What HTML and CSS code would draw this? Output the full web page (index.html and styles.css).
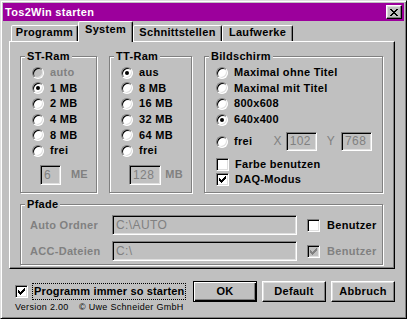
FILE: index.html
```html
<!DOCTYPE html>
<html>
<head>
<meta charset="utf-8">
<title>Tos2Win starten</title>
<link rel="stylesheet" href="styles.css">
</head>
<body>
<div class="window">
  <div class="titlebar">
    <span class="title">Tos2Win starten</span>
    <span class="close"><svg width="8" height="7" viewBox="0 0 8 7" shape-rendering="crispEdges"><path d="M0 0h2v1H0zM6 0h2v1H6zM1 1h2v1H1zM5 1h2v1H5zM2 2h4v1H2zM3 3h2v1H3zM2 4h4v1H2zM1 5h2v1H1zM5 5h2v1H5zM0 6h2v1H0zM6 6h2v1H6z" fill="#000"/></svg></span>
  </div>
  <div class="tabs">
    <div class="tab t-prog">Programm</div>
    <div class="tab active t-sys">System</div>
    <div class="tab t-sch">Schnittstellen</div>
    <div class="tab t-lw">Laufwerke</div>
  </div>
  <div class="panel">
    <div class="groups-row">
      <div class="group g-st">
        <span class="legend">ST-Ram</span>
        <div class="group-body">
          <div class="opt disabled"><span class="radio"></span>auto</div>
          <div class="opt"><span class="radio on"></span>1 MB</div>
          <div class="opt"><span class="radio"></span>2 MB</div>
          <div class="opt"><span class="radio"></span>4 MB</div>
          <div class="opt"><span class="radio"></span>8 MB</div>
          <div class="opt"><span class="radio"></span>frei</div>
          <div class="edit-row"><span class="edit w-st">6</span><span class="unit">ME</span></div>
        </div>
      </div>
      <div class="group g-tt">
        <span class="legend">TT-Ram</span>
        <div class="group-body">
          <div class="opt"><span class="radio on"></span>aus</div>
          <div class="opt"><span class="radio"></span>8 MB</div>
          <div class="opt"><span class="radio"></span>16 MB</div>
          <div class="opt"><span class="radio"></span>32 MB</div>
          <div class="opt"><span class="radio"></span>64 MB</div>
          <div class="opt"><span class="radio"></span>frei</div>
          <div class="edit-row"><span class="edit w-tt">128</span><span class="unit">MB</span></div>
        </div>
      </div>
      <div class="group g-bild">
        <span class="legend">Bildschirm</span>
        <div class="group-body">
          <div class="opt"><span class="radio"></span>Maximal ohne Titel</div>
          <div class="opt"><span class="radio"></span>Maximal mit Titel</div>
          <div class="opt"><span class="radio"></span>800x608</div>
          <div class="opt"><span class="radio on"></span>640x400</div>
          <div class="opt frei-row">
            <span class="radio"></span>frei
            <span class="coords">
              <span class="axis">X</span><span class="edit w-xy">102</span>
              <span class="axis axis-y">Y</span><span class="edit w-xy">768</span>
            </span>
          </div>
          <div class="chk-row first"><span class="checkbox"></span>Farbe benutzen</div>
          <div class="chk-row"><span class="checkbox"><svg width="7" height="7" viewBox="0 0 7 7" shape-rendering="crispEdges"><path d="M0 2h1v3H0zM1 3h1v3H1zM2 4h1v3H2zM3 3h1v3H3zM4 2h1v3H4zM5 1h1v3H5zM6 0h1v3H6z" fill="#000"/></svg></span>DAQ-Modus</div>
        </div>
      </div>
    </div>
    <div class="group g-pfade">
      <span class="legend">Pfade</span>
      <div class="pfade-body">
        <div class="path-row">
          <span class="path-label">Auto Ordner</span>
          <span class="edit w-path">C:\AUTO</span>
          <span class="path-check"><span class="checkbox"></span>Benutzer</span>
        </div>
        <div class="path-row">
          <span class="path-label">ACC-Dateien</span>
          <span class="edit w-path">C:\</span>
          <span class="path-check disabled"><span class="checkbox dis"><svg width="7" height="7" viewBox="0 0 7 7" shape-rendering="crispEdges"><path d="M0 2h1v3H0zM1 3h1v3H1zM2 4h1v3H2zM3 3h1v3H3zM4 2h1v3H4zM5 1h1v3H5zM6 0h1v3H6z" fill="#808080"/></svg></span>Benutzer</span>
        </div>
      </div>
    </div>
  </div>
  <div class="footer">
    <div class="footer-left">
      <div class="main-check">
        <span class="checkbox"><svg width="7" height="7" viewBox="0 0 7 7" shape-rendering="crispEdges"><path d="M0 2h1v3H0zM1 3h1v3H1zM2 4h1v3H2zM3 3h1v3H3zM4 2h1v3H4zM5 1h1v3H5zM6 0h1v3H6z" fill="#000"/></svg></span>
        <span class="focus">Programm immer so starten</span>
      </div>
      <div class="version"><span class="ver">Version 2.00</span><span>© Uwe Schneider GmbH</span></div>
    </div>
    <div class="buttons">
      <span class="btn btn-default">OK</span>
      <span class="btn">Default</span>
      <span class="btn">Abbruch</span>
    </div>
  </div>
</div>
</body>
</html>
```

FILE: styles.css
```css
* { box-sizing: border-box; }

body {
  margin: 0;
  background: #c0c0c0;
  font-family: "Liberation Sans", Arial, sans-serif;
  font-size: 11px;
  font-weight: bold;
  letter-spacing: 0.3px;
  line-height: 13px;
  color: #000;
}

.window {
  width: 407px;
  height: 319px;
  border: 1px solid;
  border-color: #dfdfdf #000 #000 #dfdfdf;
  box-shadow: inset 1px 1px #fff, inset -1px -1px #808080;
  padding: 2px;
  display: flex;
  flex-direction: column;
  background: #c0c0c0;
}

.titlebar {
  height: 18px;
  flex: none;
  background: #9c009c;
  color: #fff;
  display: flex;
  align-items: center;
  justify-content: space-between;
  padding: 0 2px 0 2px;
}

.close {
  width: 16px;
  height: 14px;
  background: #c0c0c0;
  border: 1px solid;
  border-color: #fff #000 #000 #fff;
  box-shadow: inset -1px -1px #808080, inset 1px 1px #dfdfdf;
  display: flex;
  align-items: center;
  justify-content: center;
}
.close svg { display: block; }

.tabs {
  display: flex;
  align-items: flex-end;
  height: 20px;
  flex: none;
  margin-left: 8px;
}

.tab {
  height: 16px;
  border: 1px solid;
  border-bottom: none;
  border-color: #fff #000 transparent #fff;
  border-radius: 2px 2px 0 0;
  box-shadow: inset -1px 0 #808080;
  text-align: center;
  line-height: 13px;
  background: #c0c0c0;
}
.tab.active {
  height: 21px;
  margin-bottom: -1px;
  line-height: 15px;
  position: relative;
  z-index: 1;
}
.t-prog { width: 67px; }
.t-sys { width: 55px; }
.t-sch { width: 89px; }
.t-lw { width: 71px; }

.panel {
  flex: none;
  margin-left: 6px;
  width: 386px;
  height: 228px;
  border: 1px solid;
  border-color: #fff #000 #000 #fff;
  box-shadow: inset -1px -1px #808080;
  padding: 14px 10px 0 10px;
}

.groups-row {
  display: flex;
  gap: 12px;
}

.group {
  position: relative;
  border: 1px solid #808080;
  box-shadow: inset 1px 1px #fff, 1px 1px #fff;
}
.g-st { width: 77px; height: 137px; }
.g-tt { width: 83px; height: 137px; }
.g-bild { width: 179px; height: 137px; }
.g-pfade { width: 363px; height: 61px; margin-top: 11px; }

.legend {
  position: absolute;
  top: -7px;
  left: 4px;
  padding: 0 2px;
  background: #c0c0c0;
  line-height: 13px;
}

.group-body {
  padding: 8px 0 0 11px;
}

.opt {
  display: flex;
  align-items: center;
  height: 15.6px;
}

.radio {
  flex: none;
  width: 12px;
  height: 12px;
  margin-right: 6px;
  border-radius: 50%;
  border: 1px solid;
  border-color: #808080 #fff #fff #808080;
  box-shadow: inset 1px 1px #000, inset -1px -1px #dfdfdf;
  background: #fff;
  display: flex;
  align-items: center;
  justify-content: center;
}
.radio.on::after {
  content: "";
  width: 4px;
  height: 4px;
  border-radius: 50%;
  background: #000;
}

.disabled { color: #808080; }
.disabled .radio { background: #c0c0c0; }

.edit-row {
  display: flex;
  align-items: center;
  justify-content: space-between;
  margin-top: 6px;
  padding: 0 8px 0 8px;
}
.unit {
  color: #808080;
}

.edit {
  display: block;
  flex: none;
  height: 20px;
  border: 1px solid;
  border-color: #808080 #fff #fff #808080;
  box-shadow: inset 1px 1px #000, inset -1px -1px #dfdfdf;
  background: #c0c0c0;
  color: #808080;
  font-weight: normal;
  font-size: 12px;
  letter-spacing: 0.4px;
  line-height: 18px;
  padding-left: 3px;
  white-space: nowrap;
}
.w-st { width: 21px; }
.w-tt { width: 32px; }
.w-xy { width: 31px; height: 19px; line-height: 17px; }
.w-path { width: 185px; }

.frei-row {
  height: 19px;
  margin-top: 5px;
}
.coords {
  display: flex;
  align-items: center;
  margin-left: auto;
  margin-right: 10px;
}
.axis {
  color: #808080;
  font-weight: normal;
  font-size: 12px;
  margin-right: 4px;
}
.axis-y { margin-left: 10px; margin-right: 6px; }

.chk-row {
  display: flex;
  align-items: center;
  height: 15px;
}
.chk-row.first { margin-top: 6px; }

.checkbox {
  flex: none;
  width: 13px;
  height: 13px;
  margin-right: 6px;
  border: 1px solid;
  border-color: #808080 #fff #fff #808080;
  box-shadow: inset 1px 1px #000, inset -1px -1px #dfdfdf;
  background: #fff;
  padding: 2px;
  display: flex;
}
.checkbox svg { display: block; }
.checkbox.dis { background: #c0c0c0; }

.pfade-body {
  padding: 10px 0 0 9px;
  display: flex;
  flex-direction: column;
  gap: 6px;
}
.path-row {
  display: flex;
  align-items: center;
  height: 20px;
}
.path-label {
  width: 82px;
  color: #808080;
}
.path-check {
  display: flex;
  align-items: center;
  margin-left: 10px;
}
.path-check .checkbox { margin-right: 7px; }

.footer {
  flex: 1;
  display: flex;
  align-items: flex-start;
  padding: 12px 0 0 12px;
}
.footer-left {
  margin-top: 2px;
}
.main-check {
  display: flex;
  align-items: center;
  height: 17px;
}
.main-check .checkbox { margin-right: 4px; }
.focus {
  border: 1px dotted #000;
  padding: 0 1px;
  line-height: 15px;
  letter-spacing: 0.15px;
}
.version {
  display: flex;
  margin-top: 2px;
  font-size: 9px;
  font-weight: normal;
  line-height: 10px;
  letter-spacing: 0.3px;
}
.ver { width: 64px; }

.buttons {
  display: flex;
  gap: 5px;
  margin-left: auto;
  margin-right: 9px;
}
.btn {
  display: flex;
  align-items: center;
  justify-content: center;
  width: 64px;
  height: 21px;
  border: 1px solid;
  border-color: #fff #000 #000 #fff;
  box-shadow: inset -1px -1px #808080, inset 1px 1px #dfdfdf;
}
.btn-default {
  border: 1px solid #000;
  box-shadow: inset 1px 1px #fff, inset -1px -1px #000, inset -2px -2px #808080;
}
```
